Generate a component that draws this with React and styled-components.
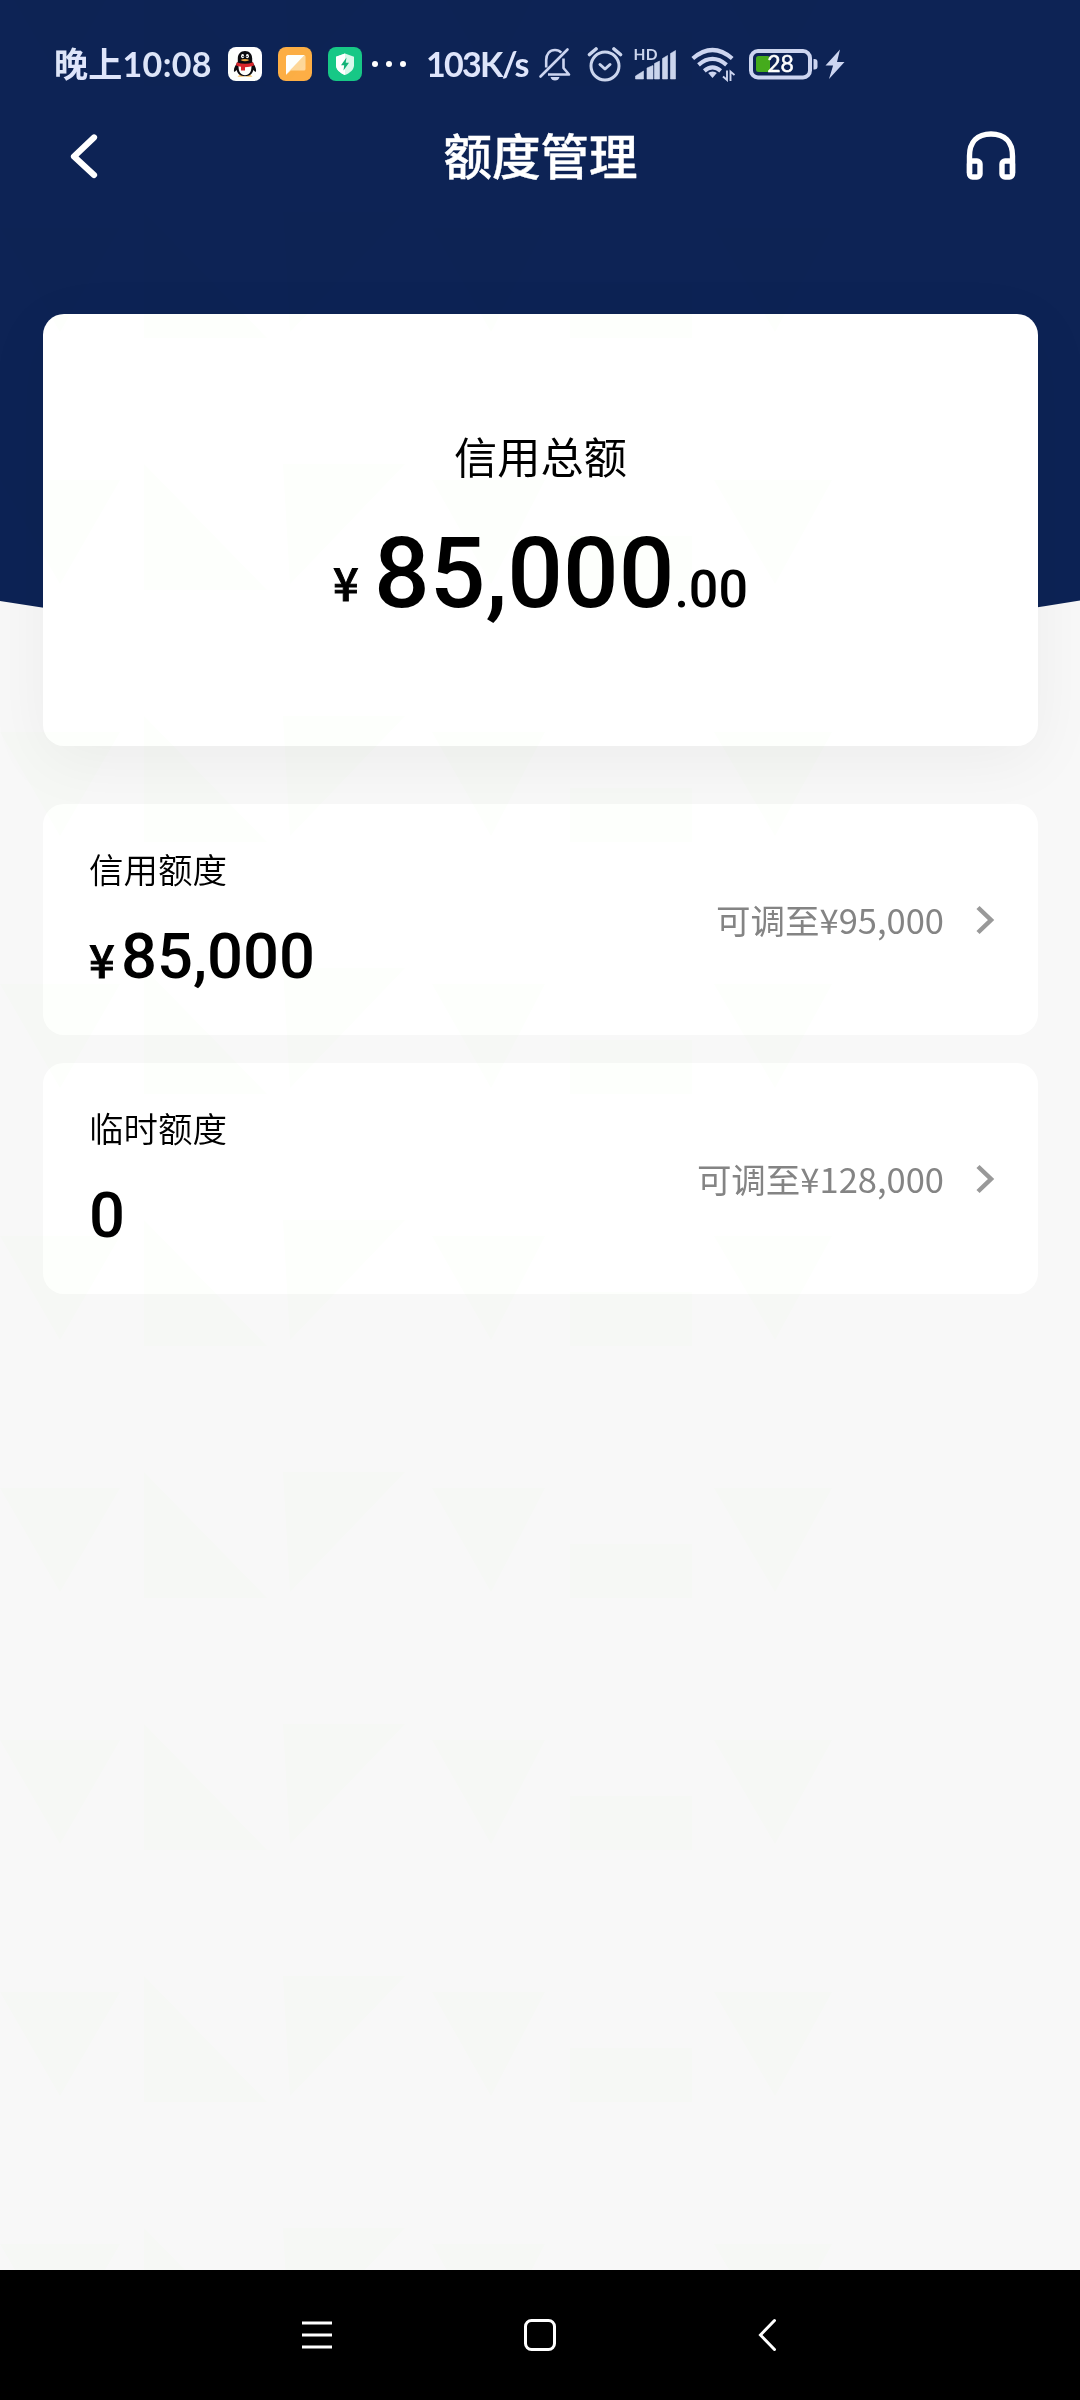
import React from 'react'
import styled, { createGlobalStyle } from 'styled-components';

const GlobalStyle = createGlobalStyle`
  * { box-sizing: border-box; }
  body {
    margin: 0;
    background: #f8f8f8;
    font-family: "Noto Sans CJK SC", sans-serif;
  }
  svg { display: block; flex: none; }
`;

const Page = styled.div`
  position: relative;
  display: flex;
  flex-direction: column;
  width: 1080px;
  height: 2400px;
  background: #f8f8f8;
  overflow: hidden;
`;

const HeroBackdrop = styled.div`
  position: absolute;
  top: 0;
  left: 0;
  width: 100%;
  height: 660px;
  background: #0d2355;
  clip-path: path('M0 0H1080V600.5Q540 690 0 601Z');
`;

const StatusBar = styled.div`
  position: relative;
  display: flex;
  align-items: center;
  height: 128px;
  padding: 0 0 0 54px;
  color: #dfe5fb;
`;

const StatusText = styled.span`
  width: ${({ $width }) => $width}px;
  margin-left: ${({ $gap }) => $gap || 0}px;
  font-family: Lato, "Noto Sans CJK SC", sans-serif;
  font-size: 34px;
  line-height: 40px;
  font-weight: 700;
  letter-spacing: ${({ $spacing }) => $spacing || 0}px;
  white-space: nowrap;
`;

const StatusIcon = styled.svg`
  margin-left: ${({ $gap }) => $gap}px;
`;

const Header = styled.header`
  position: relative;
  display: flex;
  align-items: center;
  justify-content: space-between;
  height: 55px;
  padding: 0 62px 0 68px;
`;

const Title = styled.h1`
  margin: -2px 0 0 17px;
  color: #fff;
  font-size: 48.5px;
  line-height: 55px;
  font-weight: 500;
  -webkit-text-stroke: 0.4px #fff;
`;

const Content = styled.main`
  position: relative;
  display: flex;
  flex-direction: column;
  flex: 1;
  padding: 131px 42px 0 43px;
`;

const TotalCard = styled.section`
  display: flex;
  flex-direction: column;
  align-items: center;
  height: 432px;
  margin-bottom: 58px;
  padding-top: 109px;
  border-radius: 21px;
  background: #fff;
  box-shadow: 0 14px 66px rgba(0, 0, 0, 0.05);
`;

const TotalLabel = styled.div`
  font-size: 43.2px;
  line-height: 64px;
`;

const TotalAmount = styled.div`
  display: flex;
  align-items: baseline;
  margin-top: 32px;
  font-family: Roboto, sans-serif;
  font-weight: 500;
  line-height: 110px;
`;

const Yen = styled.span`
  position: relative;
  top: ${({ $lift }) => -($lift || 0)}px;
  width: ${({ $width }) => $width}px;
  font-family: "Noto Sans CJK SC", sans-serif;
  font-size: 45px;
  line-height: 50px;
  font-weight: 500;
  -webkit-text-stroke: 0.9px #000;
`;

const Whole = styled.span`
  font-size: 98px;
`;

const Decimals = styled.span`
  font-size: 52px;
`;

const LimitRow = styled.section`
  display: flex;
  align-items: center;
  justify-content: space-between;
  height: 231px;
  margin-bottom: 28px;
  padding: 0 42px 0 46px;
  border-radius: 21px;
  background: #fff;
`;

const LimitInfo = styled.div`
  display: flex;
  flex-direction: column;
`;

const LimitName = styled.div`
  font-size: 34.5px;
  line-height: 50px;
  font-weight: 350;
`;

const LimitAmount = styled.div`
  display: flex;
  align-items: baseline;
  margin-top: 23px;
  font-family: Roboto, sans-serif;
  font-size: 63.3px;
  line-height: 80px;
  font-weight: 500;
`;

const Adjust = styled.div`
  display: flex;
  align-items: center;
  gap: 30px;
  color: #848484;
  font-size: 34.5px;
  line-height: 50px;

  span {
    margin-top: -1px;
  }
`;

const NavBar = styled.nav`
  position: relative;
  display: flex;
  align-items: center;
  justify-content: space-between;
  height: 130px;
  padding: 0 300px;
  background: #000;
`;

// faint tinted shapes repeated down the whole page
const Watermark = styled.svg`
  position: absolute;
  top: 0;
  left: 0;
  pointer-events: none;
  mix-blend-mode: multiply;
`;

const limits = [
  { name: '信用额度', yen: true, amount: '85,000', adjust: '可调至¥95,000' },
  { name: '临时额度', yen: false, amount: '0', adjust: '可调至¥128,000' },
];

const QQIcon = () => (
  <StatusIcon $gap={0} width="34" height="34" viewBox="0 0 34 34">
    <rect width="34" height="34" rx="8" fill="#fff" />
    <path d="M9.5 29.5q3-2.5 7 0zM17.5 29.5q4-2.5 7 0z" fill="#f5a623" />
    <path d="M17 4c-4.600 0-7.200 3.200-7.200 7.600v3.200C7.500 18 5.500 21.500 6 24.500c.6 1 2-.5 2.600-1.700.6 3.800 3.600 6.400 8.400 6.400s7.800-2.600 8.400-6.400c.6 1.200 2 2.700 2.600 1.700.5-3-1.500-6.500-3.800-9.700v-3.200C24.200 7.200 21.600 4 17 4z" fill="#0b0b0f" />
    <path d="M10.500 19c0 6 2.200 9.200 6.500 9.200s6.500-3.200 6.500-9.200z" fill="#fff" />
    <path d="M8.800 15.200q8.200 3 16.400 0l.8 3.300q-4.500 1.800-9 1.800v3.200h-4v-3.800q-3-.3-5-1.400z" fill="#d9252b" />
    <ellipse cx="14.600" cy="9.200" rx="1.500" ry="2.100" fill="#fff" />
    <ellipse cx="19.400" cy="9.200" rx="1.500" ry="2.100" fill="#fff" />
    <circle cx="15" cy="9.400" r=".7" />
    <circle cx="19" cy="9.400" r=".7" />
    <path d="M12.500 13q4.500-1.800 9 0-4.500 2.600-9 0z" fill="#e8a33c" />
  </StatusIcon>
);

const MessageIcon = () => (
  <StatusIcon $gap={16} width="34" height="34" viewBox="0 0 34 34">
    <rect width="34" height="34" rx="8" fill="#fdae45" />
    <path d="M8 10.500Q8 8 10.500 8H26q1.500 0 1.500 1.500V22q0 1.500-1.500 1.500H13L8 28z" fill="#ffd79b" />
    <path d="M8 10.500Q8 8 10.500 8H26.500L8 27.500z" fill="#fff" />
  </StatusIcon>
);

const ShieldIcon = () => (
  <StatusIcon $gap={16} width="34" height="34" viewBox="0 0 34 34">
    <rect width="34" height="34" rx="8" fill="#17c886" />
    <path d="M17 6.500l9 3.200v8.500c0 4.300-3.800 7.500-9 9.800-5.200-2.300-9-5.500-9-9.800V9.700z" fill="#d9f8eb" />
    <path d="M17 6.500V28c-5.200-2.300-9-5.500-9-9.800V9.700z" fill="#fff" />
    <path d="M18.500 10.500L13 18.200h3.200l-.7 5.300 5.500-7.700h-3.300z" fill="#10b377" />
  </StatusIcon>
);

const DotsIcon = () => (
  <StatusIcon $gap={9} width="38" height="8" viewBox="0 0 38 8" fill="#fff">
    <circle cx="4" cy="4" r="3" />
    <circle cx="18" cy="4" r="3" />
    <circle cx="32" cy="4" r="3" />
  </StatusIcon>
);

const BellOffIcon = () => (
  <StatusIcon $gap={0} width="34" height="36" viewBox="0 0 34 36" fill="none" stroke="#cdd5f0" strokeWidth="2.600">
    <path d="M8.200 21.500V14c0-6 3.500-10 8.800-10 2.600 0 4.800 1 6.300 2.600M25.500 12.500v9.500l5.500 6.500H10" strokeLinejoin="round" />
    <path d="M2.500 30.500L29.500 3.500" strokeLinecap="round" />
    <path d="M12.500 31h9q-1 3.600-4.500 3.600t-4.500-3.600z" fill="#cdd5f0" stroke="none" />
  </StatusIcon>
);

const AlarmIcon = () => (
  <StatusIcon $gap={15} width="36" height="36" viewBox="0 0 36 36" fill="none" stroke="#cdd5f0" strokeWidth="3" strokeLinecap="round">
    <circle cx="18" cy="20" r="14" />
    <path d="M13 18.500l5 4.500 5-4.500" strokeLinejoin="round" />
    <path d="M2.500 8.500L9 3M33.500 8.500L27 3" strokeWidth="3.600" />
  </StatusIcon>
);

const SignalIcon = () => (
  <StatusIcon $gap={11} width="44" height="36" viewBox="0 0 44 36" fill="#cdd5f0">
    <text x="-.5" y="14" fontFamily="Lato, sans-serif" fontWeight="700" fontSize="15.500" letterSpacing=".3">HD</text>
    <path d="M1.500 33v-3l8-5v8zM13 22l6-2.500V33h-6zM20.500 17.500l5-2.500v18h-5zM28.500 12.500l5-3V33h-5zM36.500 7.500l5-3V33h-5z" stroke="#cdd5f0" strokeWidth=".6" strokeLinejoin="round" />
  </StatusIcon>
);

const WifiIcon = () => (
  <StatusIcon $gap={13} width="44" height="36" viewBox="0 0 44 36" fill="none" stroke="#cdd5f0" strokeWidth="4.200">
    <path d="M1.800 12.500Q21.500-4.500 41.200 12.500" />
    <path d="M7.500 18.800Q21.500 7 35.500 18.800" />
    <path d="M13.300 24.800Q21.500 18 29.700 24.800" />
    <path d="M21.500 25.500q3 0 4.300 1.600L21.500 32l-4.300-4.900q1.300-1.600 4.300-1.600z" fill="#cdd5f0" stroke="none" />
    <path d="M36 24.500V34l-4-3.500M39.500 35v-9.500l4 3.500" strokeWidth="1.900" />
  </StatusIcon>
);

const BatteryIcon = () => (
  <StatusIcon $gap={14} width="69" height="32" viewBox="0 0 69 32">
    <rect x="2" y="3" width="59" height="26.500" rx="7" fill="none" stroke="#cdd5f0" strokeWidth="4" />
    <rect x="7" y="8" width="14" height="16" rx="2.500" fill="#45ab1c" />
    <path d="M64.500 11h1q3 0 3 3v4.500q0 3-3 3h-1z" fill="#cdd5f0" />
    <text x="31.500" y="24.300" textAnchor="middle" fill="#fff" fontFamily="Lato, sans-serif" fontSize="23" stroke="#fff" strokeWidth=".5">28</text>
  </StatusIcon>
);

const BoltIcon = () => (
  <StatusIcon $gap={7} width="20" height="32" viewBox="0 0 20 32">
    <path d="M15 1.500L.500 17.500h7.600L4 31 19.500 14H12z" fill="#cdd5f0" />
  </StatusIcon>
);

const BackIcon = () => (
  <svg width="32" height="50" viewBox="0 0 32 50" fill="none" stroke="#fff" strokeWidth="6.200" strokeLinecap="round" strokeLinejoin="round">
    <path d="M26 6.500L6 25.500l20 18.500" />
  </svg>
);

const HeadphonesIcon = () => (
  <svg width="54" height="54" viewBox="0 0 54 54" fill="none" stroke="#fff" strokeWidth="5.400" strokeLinejoin="round">
    <path d="M5.500 44V27C5.500 13 13.500 5 27 5s21.500 8 21.500 22v17" />
    <rect x="5.500" y="32" width="10.500" height="16" rx="3" />
    <rect x="38" y="32" width="10.500" height="16" rx="3" />
  </svg>
);

const ChevronIcon = () => (
  <svg width="22" height="32" viewBox="0 0 22 32" fill="none" stroke="#999" strokeWidth="4.500">
    <path d="M4 3.500L17 16 4 28.500" />
  </svg>
);

const App = () => {

  return (
    <>
      <GlobalStyle />
      <Page>
        <HeroBackdrop />
        <StatusBar>
          <StatusText $width={174} $spacing={0.3}>晚上10:08</StatusText>
          <QQIcon />
          <MessageIcon />
          <ShieldIcon />
          <DotsIcon />
          <StatusText $gap={17} $width={111.5} $spacing={-1.7}>103K/s</StatusText>
          <BellOffIcon />
          <AlarmIcon />
          <SignalIcon />
          <WifiIcon />
          <BatteryIcon />
          <BoltIcon />
        </StatusBar>
        <Header>
          <BackIcon />
          <Title>额度管理</Title>
          <HeadphonesIcon />
        </Header>
        <Content>
          <TotalCard>
            <TotalLabel>信用总额</TotalLabel>
            <TotalAmount>
              <Yen $width={41} $lift={6}>¥</Yen>
              <Whole>85,000</Whole>
              <Decimals>.00</Decimals>
            </TotalAmount>
          </TotalCard>
          {limits.map((limit) => (
            <LimitRow key={limit.name}>
              <LimitInfo>
                <LimitName>{limit.name}</LimitName>
                <LimitAmount>
                  {limit.yen && <Yen $width={32}>¥</Yen>}
                  <span>{limit.amount}</span>
                </LimitAmount>
              </LimitInfo>
              <Adjust>
                <span>{limit.adjust}</span>
                <ChevronIcon />
              </Adjust>
            </LimitRow>
          ))}
        </Content>
        <NavBar>
          <svg width="34" height="34" viewBox="0 0 34 34" stroke="#fff" strokeWidth="3">
            <path d="M2 5h30M2 17h30M2 29h30" />
          </svg>
          <svg width="34" height="34" viewBox="0 0 34 34" fill="none" stroke="#fff" strokeWidth="3">
            <rect x="2.500" y="2.500" width="29" height="29" rx="6" />
          </svg>
          <svg width="34" height="34" viewBox="0 0 34 34" fill="none" stroke="#fff" strokeWidth="3" strokeLinecap="round">
            <path d="M28.500 2.500L14.500 17l14 14.500" />
          </svg>
        </NavBar>
        <Watermark width="1080" height="2270">
          <defs>
            <pattern id="shapes" x="0" y="210" width="1080" height="252" patternUnits="userSpaceOnUse">
              <path
                d="M0 18h120L60 122zM144 2v126h123zM283 2h122L290 122zM432 18h113L491 122zM570 74h122v54H570zM714 18h118L775 122z"
                fill="#fdfffc"
              />
            </pattern>
          </defs>
          <rect width="1080" height="2270" fill="url(#shapes)" />
        </Watermark>
      </Page>
    </>
  );
}

export default App
